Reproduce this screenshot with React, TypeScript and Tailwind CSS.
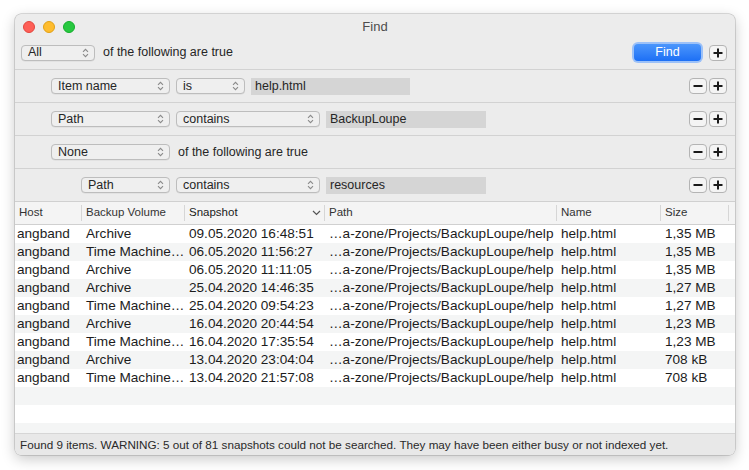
import { ReactNode } from "react";

const font = { fontFamily: '"Liberation Sans", Arial, sans-serif' };

function UpDown() {
  return (
    <svg width="7" height="10" viewBox="0 0 7 10" className="shrink-0">
      <path d="M1 3.8 L3.5 1.3 L6 3.8" fill="none" stroke="#8a8a8a" strokeWidth="1.1" />
      <path d="M1 6.2 L3.5 8.7 L6 6.2" fill="none" stroke="#8a8a8a" strokeWidth="1.1" />
    </svg>
  );
}

function Popup({ label, w }: { label: string; w: string }) {
  return (
    <div
      className={`${w} h-[16px] flex items-center justify-between pl-[6px] pr-[5px] rounded-[4px] border border-[#bdbdbd] bg-[#efefef] text-[12.5px] text-[#262626] shadow-[0_0.5px_0.5px_rgba(0,0,0,0.08)]`}
    >
      <span className="leading-none">{label}</span>
      <UpDown />
    </div>
  );
}

function Field({ value, w }: { value: string; w: string }) {
  return (
    <div className={`${w} h-[17px] flex items-center px-[4px] bg-[#d5d5d5] text-[12.5px] text-[#262626] leading-none`}>
      {value}
    </div>
  );
}

function SquareBtn({ sign }: { sign: "+" | "-" }) {
  return (
    <div className="w-[18px] h-[16px] flex items-center justify-center rounded-[4px] border border-[#b4b4b4] bg-[#f4f4f4]">
      <svg width="10" height="10" viewBox="0 0 10 10">
        <rect x="0.5" y="4" width="9" height="2" fill="#1a1a1a" />
        {sign === "+" && <rect x="4" y="0.5" width="2" height="9" fill="#1a1a1a" />}
      </svg>
    </div>
  );
}

function CriteriaRow({ indent, children }: { indent: string; children: ReactNode }) {
  return (
    <div className={`h-[33px] flex items-center border-t border-[#d2d2d2] ${indent} pr-[8px]`}>
      <div className="flex items-center gap-[6px] flex-1">{children}</div>
      <div className="flex items-center gap-[2px]">
        <SquareBtn sign="-" />
        <SquareBtn sign="+" />
      </div>
    </div>
  );
}

const cols = [
  { name: "Host", w: "w-[67px]" },
  { name: "Backup Volume", w: "w-[103px]" },
  { name: "Snapshot", w: "w-[140px]" },
  { name: "Path", w: "w-[232px]" },
  { name: "Name", w: "w-[104px]" },
  { name: "Size", w: "w-[68px]" },
];

const rows = [
  ["angband", "Archive", "09.05.2020 16:48:51", "1,35 MB"],
  ["angband", "Time Machine…", "06.05.2020 11:56:27", "1,35 MB"],
  ["angband", "Archive", "06.05.2020 11:11:05", "1,35 MB"],
  ["angband", "Archive", "25.04.2020 14:46:35", "1,27 MB"],
  ["angband", "Time Machine…", "25.04.2020 09:54:23", "1,27 MB"],
  ["angband", "Archive", "16.04.2020 20:44:54", "1,23 MB"],
  ["angband", "Time Machine…", "16.04.2020 17:35:54", "1,23 MB"],
  ["angband", "Archive", "13.04.2020 23:04:04", "708 kB"],
  ["angband", "Time Machine…", "13.04.2020 21:57:08", "708 kB"],
];

export default function App() {
  return (
    <div className="w-[749px] h-[470px] bg-white pt-[14px] pl-[15px]" style={font}>
      <div className="w-[720px] h-[441px] rounded-[6px] overflow-hidden bg-[#ececec] flex flex-col shadow-[0_0_0_0.5px_rgba(0,0,0,0.25),0_4px_14px_rgba(0,0,0,0.22)]">
        {/* title bar */}
        <div className="h-[22px] flex items-center px-[8px] pt-[4px]">
          <div className="flex items-center gap-[8px]">
            <span className="w-[12px] h-[12px] rounded-full bg-[#fe5f57] border border-[#e2463f]" />
            <span className="w-[12px] h-[12px] rounded-full bg-[#febc2e] border border-[#e1a116]" />
            <span className="w-[12px] h-[12px] rounded-full bg-[#28c840] border border-[#14ae2c]" />
          </div>
          <div className="flex-1 text-center text-[13px] text-[#4d4d4d] pr-[52px]">Find</div>
        </div>

        {/* top row */}
        <div className="h-[33px] flex items-center pl-[6px] pr-[8px] gap-[8px]">
          <Popup label="All" w="w-[74px]" />
          <span className="text-[12.5px] text-[#262626] flex-1">of the following are true</span>
          <div className="w-[71px] h-[21px] rounded-[6px] bg-[#9cc1f8] p-[2px]">
            <div className="w-full h-full rounded-[4px] bg-gradient-to-b from-[#4b96fc] to-[#1c6ff5] flex items-center justify-center text-[12.5px] text-white">
              Find
            </div>
          </div>
          <div className="-ml-[2px]">
            <SquareBtn sign="+" />
          </div>
        </div>

        <CriteriaRow indent="pl-[36px]">
          <Popup label="Item name" w="w-[119px]" />
          <Popup label="is" w="w-[69px]" />
          <Field value="help.html" w="w-[159px]" />
        </CriteriaRow>
        <CriteriaRow indent="pl-[36px]">
          <Popup label="Path" w="w-[119px]" />
          <Popup label="contains" w="w-[144px]" />
          <Field value="BackupLoupe" w="w-[160px]" />
        </CriteriaRow>
        <CriteriaRow indent="pl-[36px]">
          <Popup label="None" w="w-[119px]" />
          <span className="text-[12.5px] text-[#262626] ml-[2px]">of the following are true</span>
        </CriteriaRow>
        <CriteriaRow indent="pl-[66px]">
          <Popup label="Path" w="w-[89px]" />
          <Popup label="contains" w="w-[144px]" />
          <Field value="resources" w="w-[160px]" />
        </CriteriaRow>

        {/* table header */}
        <div className="h-[24px] flex items-center bg-[#f4f4f4] border-t border-b border-[#d0d0d0] text-[11.5px] text-[#333]">
          {cols.map((c, i) => (
            <div key={c.name} className={`${c.w} h-full flex items-center`}>
              <span className={`pl-[4px] flex-1 ${i === 2 ? "text-[#1a1a1a]" : ""}`}>{c.name}</span>
              {i === 2 && (
                <svg width="9" height="6" viewBox="0 0 9 6" className="mr-[3px]">
                  <path d="M1 1 L4.5 4.5 L8 1" fill="none" stroke="#555" strokeWidth="1.2" />
                </svg>
              )}
              <span className="w-px h-[16px] bg-[#d6d6d6]" />
            </div>
          ))}
        </div>

        {/* rows */}
        <div className="flex flex-col text-[13.6px] text-[#1c1c1c]">
          {rows.map((r, i) => (
            <div key={i} className={`h-[18px] flex items-center ${i % 2 ? "bg-[#f4f5f5]" : "bg-white"}`}>
              <span className="w-[67px] pl-[2px] whitespace-nowrap">{r[0]}</span>
              <span className="w-[103px] pl-[4px] whitespace-nowrap">{r[1]}</span>
              <span className="w-[140px] pl-[4px] whitespace-nowrap">{r[2]}</span>
              <span className="w-[232px] pl-[4px] whitespace-nowrap">…a-zone/Projects/BackupLoupe/help</span>
              <span className="w-[104px] pl-[4px]">help.html</span>
              <span className="w-[68px] pl-[4px] whitespace-nowrap">{r[3]}</span>
            </div>
          ))}
          <div className="h-[18px] bg-[#f4f5f5]" />
          <div className="h-[18px] bg-white" />
          <div className="h-[10px] bg-[#f4f5f5]" />
        </div>

        {/* status */}
        <div className="flex-1 flex items-center border-t border-[#d6d6d6] bg-[#e8e8e8] pl-[5px] text-[11.7px] text-[#2a2a2a] whitespace-nowrap">
          Found 9 items. WARNING: 5 out of 81 snapshots could not be searched. They may have been either busy or not indexed yet.
        </div>
      </div>
    </div>
  );
}
